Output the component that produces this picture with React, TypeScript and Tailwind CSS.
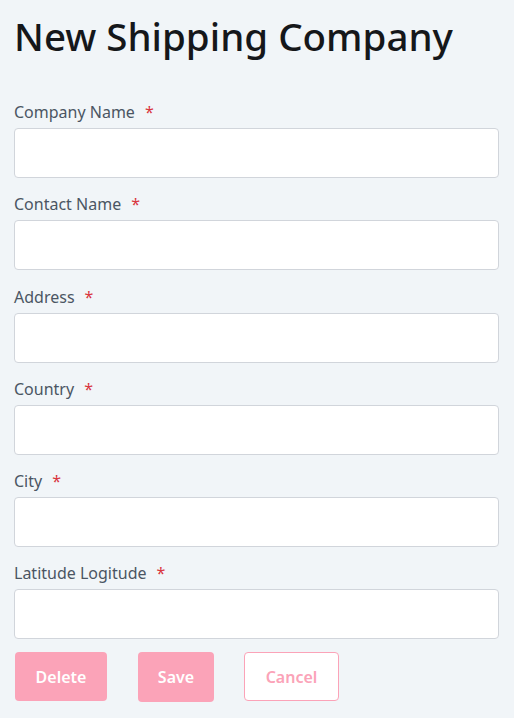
import React from "react"

const fields = [
  { label: "Company Name" },
  { label: "Contact Name" },
  { label: "Address" },
  { label: "Country" },
  { label: "City" },
  { label: "Latitude Logitude" },
]

const App = () => {
  return (
    <div className="min-h-screen bg-[#f1f5f8] pl-[14px] pr-[15px] pt-[8px] font-['Noto_Sans',sans-serif]">
      <h1 className="text-[38.5px] leading-[56px] font-medium text-[#15171a] mb-[36px]">
        New Shipping Company
      </h1>

      <form className="flex flex-col">
        {fields.map((item, idx) => {
          return (
            <div key={idx} className="mb-[14.25px]">
              <label className="block text-[16px] leading-[24px] text-[#4b5563] mb-[4px]">
                {item.label}
                <span className="ml-[10px] text-[#d9363e]">*</span>
              </label>
              <input
                type="text"
                className="block w-full h-[50px] bg-white border border-[#d1d5db] rounded-[4px] px-3"
              />
            </div>
          )
        })}

        <div className="flex flex-row items-center mt-[-2px] pl-px">
          <button
            type="button"
            className="w-[92px] h-[49px] bg-[#fba3b8] text-white font-semibold text-[16px] rounded-[4px]"
          >
            Delete
          </button>
          <button
            type="button"
            className="ml-[31px] w-[76px] h-[50px] bg-[#fba3b8] text-white font-semibold text-[16px] rounded-[4px]"
          >
            Save
          </button>
          <button
            type="button"
            className="ml-[30px] w-[95px] h-[49px] bg-white border border-[#fba3b8] text-[#fba3b8] font-semibold text-[16px] rounded-[4px]"
          >
            Cancel
          </button>
        </div>
      </form>
    </div>
  )
}

export default App
